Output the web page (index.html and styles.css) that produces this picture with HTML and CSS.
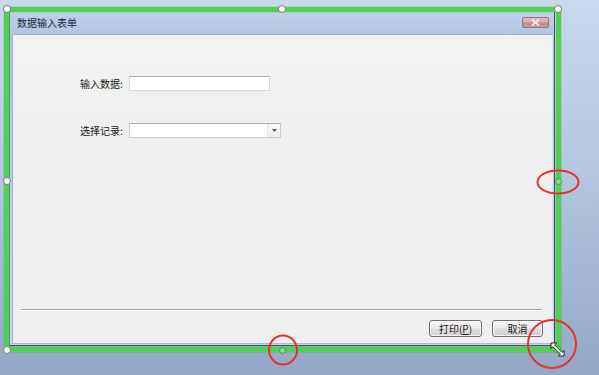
FILE: index.html
```html
<!DOCTYPE html>
<html lang="zh">
<head>
<meta charset="utf-8">
<title>数据输入表单</title>
<link rel="stylesheet" href="styles.css">
</head>
<body>
<div class="stage">
  <div class="window">
    <div class="titlebar">
      <span class="title">数据输入表单</span>
      <span class="close">
        <svg width="9" height="7" viewBox="0 0 9 7"><path d="M1 0.5 L8 6.5 M8 0.5 L1 6.5" stroke="#f4eeee" stroke-width="1.8" fill="none"/></svg>
      </span>
    </div>
    <div class="client">
      <div class="form">
        <div class="row">
          <span class="label">输入数据:</span>
          <span class="input"></span>
        </div>
        <div class="row">
          <span class="label">选择记录:</span>
          <span class="select"><span class="arrow"><svg width="5" height="3" viewBox="0 0 5 3"><path d="M0 0 H5 L2.5 3 Z" fill="#555"/></svg></span></span>
        </div>
      </div>
      <div class="footer">
        <div class="sep"></div>
        <div class="buttons">
          <button class="btn btn-print">打印(<u>P</u>)</button>
          <button class="btn btn-cancel">取消</button>
        </div>
      </div>
    </div>
  </div>

  <div class="selection"></div>
  <span class="handle h-tl"></span>
  <span class="handle h-tc"></span>
  <span class="handle h-tr"></span>
  <span class="handle h-ml"></span>
  <span class="handle h-bl"></span>
  <span class="handle green h-mr"></span>
  <span class="handle green h-bc"></span>

  <svg class="marks" width="599" height="375" viewBox="0 0 599 375">
    <ellipse cx="558" cy="182" rx="20.5" ry="11.5" fill="none" stroke="#e8312e" stroke-width="2"/>
    <ellipse cx="283" cy="350" rx="14" ry="14.5" fill="none" stroke="#e8312e" stroke-width="2"/>
    <circle cx="552" cy="344" r="24" fill="none" stroke="#e8312e" stroke-width="2"/>
    <circle cx="557.5" cy="349.5" r="3.5" fill="#7fdc7f" stroke="#3a9e3a" stroke-width="1"/>
    <path transform="translate(551 343)" d="M0 0 L5.5 0 L3.6 1.9 L11.1 9.4 L13 7.5 L13 13 L7.5 13 L9.4 11.1 L1.9 3.6 L0 5.5 Z" fill="#ffffff" stroke="#111111" stroke-width="0.9" stroke-linejoin="miter"/>
  </svg>
</div>
</body>
</html>
```

FILE: styles.css
```css
html, body {
  margin: 0;
  padding: 0;
}

body {
  font-family: "Noto Sans CJK SC", "Noto Sans", sans-serif;
  font-size: 10px;
  color: #1a1a1a;
}

.stage {
  position: relative;
  width: 599px;
  height: 375px;
  overflow: hidden;
  box-sizing: border-box;
  padding: 11px 0 0 9px;
  background: linear-gradient(to bottom, #c9d9ee 0%, #b4c7e0 45%, #93a8c6 100%);
  display: flex;
  align-items: flex-start;
}

.window {
  width: 546px;
  height: 335px;
  box-sizing: border-box;
  border: 1px solid #3e4f66;
  border-left-color: #6d829f;
  padding: 0 1px 2px 2px;
  background: linear-gradient(to bottom, #bdd0e9 0%, #afc4df 8%, #c3d5eb 100%);
  display: flex;
  flex-direction: column;
}

.titlebar {
  height: 22px;
  flex: none;
  display: flex;
  align-items: flex-start;
  justify-content: space-between;
  padding: 0 4px 0 5px;
}

.title {
  line-height: 22px;
  font-size: 10px;
  color: #1e2733;
}

.close {
  margin-top: 5px;
  width: 27px;
  height: 11px;
  box-sizing: border-box;
  border: 1px solid #94777a;
  border-radius: 2px;
  background: linear-gradient(to bottom, #e0c0c0 0%, #d4a6a6 45%, #c48a8a 55%, #cf9d9d 100%);
  display: flex;
  align-items: center;
  justify-content: center;
}

.close svg {
  display: block;
}

.client {
  flex: 1;
  background: linear-gradient(to bottom, #f3f3f3 0%, #efefef 30%, #efefef 100%);
  display: flex;
  flex-direction: column;
  border: 1px solid #9fb2cc;
  border-right-color: #dfe6ef;
  border-bottom-color: #a9bcd4;
  margin-bottom: -1px;
}

.form {
  padding: 41px 0 0 67px;
  display: flex;
  flex-direction: column;
  gap: 32px;
}

.row {
  display: flex;
  align-items: center;
  height: 15px;
}

.label {
  width: 49px;
  flex: none;
  line-height: 15px;
  color: #1a1a1a;
}

.input {
  width: 141px;
  height: 15px;
  box-sizing: border-box;
  background: #ffffff;
  border: 1px solid #d5dbe2;
  border-top-color: #abadb3;
}

.select {
  width: 152px;
  height: 15px;
  box-sizing: border-box;
  background: #ffffff;
  border: 1px solid #c7ccd3;
  border-top-color: #a9adb3;
  display: flex;
  justify-content: flex-end;
}

.arrow {
  width: 13px;
  height: 13px;
  box-sizing: border-box;
  border-left: 1px solid #dfe3e8;
  background: linear-gradient(to bottom, #fbfbfb, #eeeeee);
  display: flex;
  align-items: center;
  justify-content: center;
}

.arrow svg {
  display: block;
}

.footer {
  margin-top: auto;
  display: flex;
  flex-direction: column;
}

.sep {
  height: 1px;
  margin: 0 10px 0 8px;
  background: #a0a0a0;
  box-shadow: 0 1px 0 #ffffff;
}

.buttons {
  margin-top: 10px;
  padding: 0 9px 6px 0;
  display: flex;
  justify-content: flex-end;
  gap: 10px;
}

.btn {
  height: 17px;
  box-sizing: border-box;
  margin: 0;
  padding: 0;
  border: 1px solid #707070;
  border-radius: 3px;
  background: linear-gradient(to bottom, #f6f6f6 0%, #ebebeb 48%, #dddddd 52%, #d2d2d2 100%);
  font-family: "Noto Sans CJK SC", "Noto Sans", sans-serif;
  font-size: 10px;
  line-height: 15px;
  color: #1a1a1a;
  box-shadow: inset 0 0 0 1px rgba(255, 255, 255, 0.7);
}

.btn u {
  text-decoration: underline;
}

.btn-print {
  width: 53px;
}

.btn-cancel {
  width: 51px;
}

/* selection overlay */
.selection {
  position: absolute;
  left: 4px;
  top: 7px;
  width: 557px;
  height: 345px;
  box-sizing: border-box;
  border: 5px solid #4fd24f;
  box-shadow: 0 0 1px #2e9e2e, inset 0 0 1px #2e9e2e;
}

.handle {
  position: absolute;
  width: 8px;
  height: 8px;
  box-sizing: border-box;
  border-radius: 50%;
  background: #ffffff;
  border: 1px solid #7a7a7a;
  margin: -4px 0 0 -4px;
}

.handle.green {
  width: 7px;
  height: 7px;
  margin: -3.5px 0 0 -3.5px;
  background: #84df84;
  border-color: #3a9e3a;
}

.h-tl { left: 7px; top: 9px; }
.h-tc { left: 282px; top: 9px; }
.h-tr { left: 558px; top: 9px; }
.h-ml { left: 7px; top: 181px; }
.h-bl { left: 7px; top: 350px; }
.h-mr { left: 558px; top: 181px; }
.h-bc { left: 282px; top: 350px; }

.marks {
  position: absolute;
  left: 0;
  top: 0;
  pointer-events: none;
}
```
